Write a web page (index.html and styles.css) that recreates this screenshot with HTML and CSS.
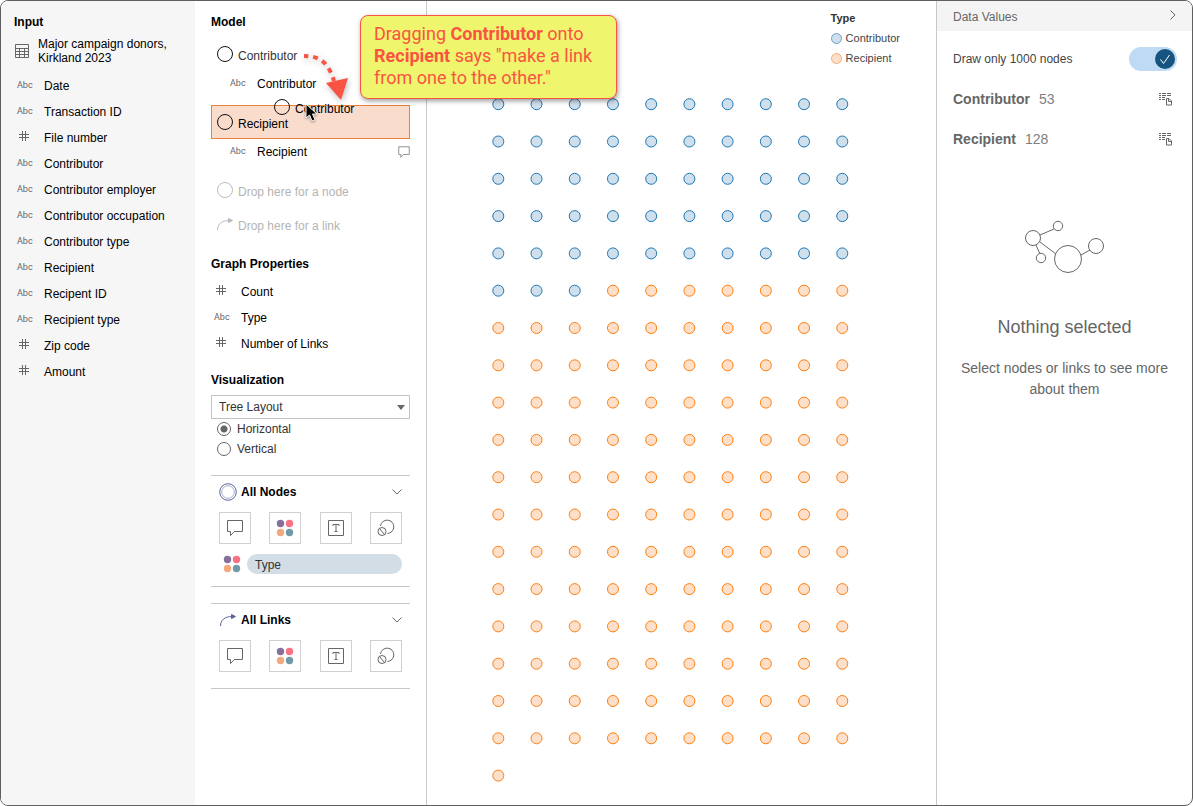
FILE: index.html
```html
<!DOCTYPE html>
<html lang="en">
<head>
    <meta charset="UTF-8">
    <meta name="viewport" content="width=device-width, initial-scale=1.0">
    <title>Graph Model</title>
    <link rel="stylesheet" href="styles.css">
</head>
<body>
    <svg class="sprite" aria-hidden="true">
        <symbol id="hash" viewBox="0 0 12 12"><path d="M4.500 1v10M7.500 1v10M1 4.500h10M1 7.500h10"/></symbol>
        <symbol id="node" viewBox="0 0 18 18"><circle cx="9" cy="9" r="7.500"/></symbol>
        <symbol id="link" viewBox="0 0 18 18"><path d="M1.500 15C1.500 9 6 5.500 13 5.500"/><path class="tip" d="M12.500 3.500l4 2-4 2z"/></symbol>
        <symbol id="chevron" viewBox="0 0 12 12"><path d="M1.500 3.500l4.500 4.500 4.500-4.500"/></symbol>
        <symbol id="bubble" viewBox="0 0 20 20"><path d="M2.500 2.500h15v11h-8l-4 4v-4h-3z"/></symbol>
        <symbol id="colors" viewBox="0 0 20 20">
            <circle cx="5.500" cy="5.500" r="3.700" fill="#85709a"/>
            <circle cx="14.500" cy="5.500" r="3.700" fill="#fa7084"/>
            <circle cx="5.500" cy="14.500" r="3.700" fill="#f4a97c"/>
            <circle cx="14.500" cy="14.500" r="3.700" fill="#6e9ba5"/>
        </symbol>
        <symbol id="label" viewBox="0 0 20 20"><path d="M2.500 2.500h15v15h-15zM7 8V6.500h6V8M10 6.500v7M8.500 13.500h3"/></symbol>
        <symbol id="size" viewBox="0 0 20 20"><path d="M4.500 8a6.700 6.700 0 1 1 7 7.500"/><circle cx="6" cy="13.500" r="4"/><path d="M3.500 10.500l5 6"/></symbol>
        <symbol id="rows" viewBox="0 0 14 14"><path d="M1 1.500h2M4 1.500h4M9 1.500h4M1 3.500h2M4 3.500h4M9 3.500h4M1 5.500h2M4 5.500h3M1 7.500h2M4 7.500h3"/><path d="M8.500 6.500h2.500l2.500 2.500v4h-5zM10.500 7v2.500h3"/></symbol>
    </svg>

    <div class="app">
        <aside class="input-panel">
            <h2>Input</h2>
            <div class="source">
                <svg class="table-icon" viewBox="0 0 14 14"><path d="M.5.5h13v13H.5zM.5 4.500h13M.5 7.500h13M.5 10.500h13M4.500 4.500v9M9.500 4.500v9"/></svg>
                <span>Major campaign donors, Kirkland 2023</span>
            </div>
            <ul class="fields">
                <li><span class="abc">Abc</span>Date</li>
                <li><span class="abc">Abc</span>Transaction ID</li>
                <li><svg class="hash"><use href="#hash"/></svg>File number</li>
                <li><span class="abc">Abc</span>Contributor</li>
                <li><span class="abc">Abc</span>Contributor employer</li>
                <li><span class="abc">Abc</span>Contributor occupation</li>
                <li><span class="abc">Abc</span>Contributor type</li>
                <li><span class="abc">Abc</span>Recipient</li>
                <li><span class="abc">Abc</span>Recipent ID</li>
                <li><span class="abc">Abc</span>Recipient type</li>
                <li><svg class="hash"><use href="#hash"/></svg>Zip code</li>
                <li><svg class="hash"><use href="#hash"/></svg>Amount</li>
            </ul>
        </aside>

        <section class="model-panel">
            <h2>Model</h2>
            <div class="model">
                <div class="node faded"><svg class="shape"><use href="#node"/></svg><span>Contributor</span></div>
                <div class="attribute"><span class="abc">Abc</span>Contributor</div>
                <div class="node target"><svg class="shape"><use href="#node"/></svg><span>Recipient</span></div>
                <div class="attribute"><span class="abc">Abc</span>Recipient<svg class="note"><use href="#bubble"/></svg></div>
                <div class="node drop"><svg class="shape"><use href="#node"/></svg><span>Drop here for a node</span></div>
                <div class="node drop"><svg class="shape"><use href="#link"/></svg><span>Drop here for a link</span></div>
            </div>

            <h2 class="spaced">Graph Properties</h2>
            <ul class="fields">
                <li><svg class="hash"><use href="#hash"/></svg>Count</li>
                <li><span class="abc">Abc</span>Type</li>
                <li><svg class="hash"><use href="#hash"/></svg>Number of Links</li>
            </ul>

            <h2 class="spaced">Visualization</h2>
            <div class="select">
                <select aria-label="Layout">
                    <option>Tree Layout</option>
                </select>
            </div>
            <label class="radio"><input type="radio" name="direction" checked>Horizontal</label>
            <label class="radio"><input type="radio" name="direction">Vertical</label>

            <div class="encoding">
                <div class="encoding-head">
                    <svg class="ring" viewBox="0 0 18 18"><circle cx="9" cy="9" r="8.300"/><circle class="inner" cx="9" cy="9" r="6.300"/></svg>
                    <h3>All Nodes</h3>
                    <svg class="chevron"><use href="#chevron"/></svg>
                </div>
                <div class="tools">
                    <button aria-label="Tooltip"><svg><use href="#bubble"/></svg></button>
                    <button aria-label="Color"><svg class="colors"><use href="#colors"/></svg></button>
                    <button aria-label="Label"><svg><use href="#label"/></svg></button>
                    <button aria-label="Size"><svg><use href="#size"/></svg></button>
                </div>
                <div class="pill-row"><svg class="colors"><use href="#colors"/></svg><span class="pill">Type</span></div>
            </div>

            <div class="encoding">
                <div class="encoding-head">
                    <svg class="ring"><use href="#link"/></svg>
                    <h3>All Links</h3>
                    <svg class="chevron"><use href="#chevron"/></svg>
                </div>
                <div class="tools">
                    <button aria-label="Tooltip"><svg><use href="#bubble"/></svg></button>
                    <button aria-label="Color"><svg class="colors"><use href="#colors"/></svg></button>
                    <button aria-label="Label"><svg><use href="#label"/></svg></button>
                    <button aria-label="Size"><svg><use href="#size"/></svg></button>
                </div>
            </div>

            <!-- drag in progress -->
            <div class="ghost"><svg class="shape"><use href="#node"/></svg><span>Contributor</span></div>
            <svg class="cursor" viewBox="0 0 14 20"><path d="M1 1v14l3.500-3 2.500 6 3-1.300L7.500 11H12z"/></svg>
            <svg class="arrow" viewBox="0 0 50 54"><path class="dots" d="M4 6C20 6 28 12 34 31"/><path class="head" d="M26 33l22-5-7 22z"/></svg>
            <div class="callout">Dragging <b>Contributor</b> onto <b>Recipient</b> says "make a link from one to the other."</div>
        </section>

        <main class="canvas">
            <svg id="graph" viewBox="0 0 509 804" preserveAspectRatio="xMidYMin meet"></svg>
            <div class="legend">
                <h4>Type</h4>
                <div><span class="dot contributor"></span>Contributor</div>
                <div><span class="dot recipient"></span>Recipient</div>
            </div>
        </main>

        <aside class="data-panel">
            <header>
                <span>Data Values</span>
                <svg class="chevron right"><use href="#chevron"/></svg>
            </header>
            <div class="values">
                <div class="limit">
                    <label for="limit">Draw only 1000 nodes</label>
                    <span class="toggle">
                        <input type="checkbox" id="limit" checked>
                        <svg viewBox="0 0 20 20"><path d="M5.500 10.500l3 4L14.500 6"/></svg>
                    </span>
                </div>
                <div class="count"><b>Contributor</b><span>53</span><svg><use href="#rows"/></svg></div>
                <div class="count"><b>Recipient</b><span>128</span><svg><use href="#rows"/></svg></div>
            </div>
            <div class="empty">
                <svg viewBox="0 0 82 54">
                    <path d="M16 15l14-6M12 25l4 9M16 22l16 12M57 35l9-5"/>
                    <circle cx="9" cy="18" r="7.500"/>
                    <circle cx="34" cy="6" r="4.700"/>
                    <circle cx="17" cy="38" r="4.700"/>
                    <circle cx="44" cy="39" r="13.500"/>
                    <circle cx="72" cy="26" r="7.500"/>
                </svg>
                <h3>Nothing selected</h3>
                <p>Select nodes or links to see more about them</p>
            </div>
        </aside>
    </div>

    <script>
        const graph = document.getElementById('graph');
        const contributors = 53;
        const recipients = 128;
        const columns = 10;

        for (let i = 0; i < contributors + recipients; i++) {
            const circle = document.createElementNS('http://www.w3.org/2000/svg', 'circle');
            circle.setAttribute('cx', 71.3 + (i % columns) * 38.22);
            circle.setAttribute('cy', 103.2 + Math.floor(i / columns) * 37.3);
            circle.setAttribute('r', 5.5);
            circle.setAttribute('class', i < contributors ? 'contributor' : 'recipient');
            graph.appendChild(circle);
        }
    </script>
</body>
</html>
```
FILE: styles.css
```css
* {
    box-sizing: border-box;
}
body {
    margin: 0;
    font-family: "Liberation Sans", Arial, sans-serif;
    font-size: 12px;
    line-height: 16px;
    color: #000;
}
h2, h3, h4, p, ul {
    margin: 0;
    padding: 0;
}
h2, h3 {
    font-size: 12px;
}
svg {
    display: block;
    flex: none;
    fill: none;
    stroke: #666;
}
.sprite {
    position: absolute;
    width: 0;
    height: 0;
}
.app {
    display: grid;
    grid-template-columns: 194px 232px 1fr 256px;
    min-height: 100vh;
    border: 1px solid #5f5f5f;
    border-radius: 8px;
    overflow: hidden;
}

/* input */
.input-panel {
    padding: 13px;
    background-color: #f6f6f6;
}
.source {
    display: flex;
    align-items: center;
    gap: 9px;
    margin: 7px 0 8px;
    padding-left: 1px;
    line-height: 14px;
}
.table-icon {
    width: 14px;
    height: 14px;
}
.fields {
    list-style: none;
}
.fields li {
    display: flex;
    align-items: center;
    height: 26px;
    padding-left: 3px;
}
.abc {
    width: 27px;
    padding-bottom: 3px;
    font-family: Roboto, sans-serif;
    font-size: 9px;
    color: #666;
}
.hash {
    width: 12px;
    height: 12px;
    margin: 0 14px 4px 1px;
}

/* model */
.model-panel {
    position: relative;
    padding: 13px 16px;
    border-right: 1px solid #c8c8c8;
}
.model {
    margin-top: 7px;
}
.node, .ghost {
    display: flex;
    align-items: center;
    gap: 4px;
    height: 34px;
    padding-left: 5px;
}
.node span, .ghost span {
    padding-top: 3px;
}
.shape {
    width: 18px;
    height: 18px;
    stroke: #111;
}
.faded {
    color: #333;
}
.target {
    margin-top: 8px;
    padding-left: 4px;
    background-color: #fadccd;
    border: 1px solid #e6813f;
}
.attribute {
    display: flex;
    align-items: center;
    height: 26px;
    padding-left: 19px;
}
.note {
    width: 14px;
    height: 14px;
    margin-left: auto;
    margin-right: -1px;
}
.drop {
    color: #b4b4b4;
}
.attribute + .drop {
    margin-top: 8px;
}
.drop .shape {
    stroke: #bbb;
    fill: none;
}
.tip {
    fill: context-stroke;
}
.spaced {
    margin: 15px 0 7px;
}
.select {
    position: relative;
}
.select::after {
    content: "";
    position: absolute;
    top: 10px;
    right: 5px;
    border: 4px solid transparent;
    border-top: 5px solid #666;
    border-bottom: 0;
}
.select select {
    display: block;
    width: 100%;
    height: 24px;
    padding: 0 7px;
    appearance: none;
    background-color: #fff;
    border: 1px solid #c4c4c4;
    border-radius: 0;
    font: inherit;
    color: #333;
}
.radio {
    display: flex;
    align-items: center;
    gap: 6px;
    height: 20px;
    padding-left: 6px;
    color: #333;
}
.radio input {
    appearance: none;
    width: 14px;
    height: 14px;
    margin: 0;
    border: 1px solid #666;
    border-radius: 50%;
}
.radio input:checked {
    background: radial-gradient(#666 3px, transparent 4px);
}
.encoding {
    margin-top: 16px;
    padding: 7px 8px 12px;
    border: solid #c8c8c8;
    border-width: 1px 0;
}
.encoding + .encoding {
    padding-bottom: 16px;
}
.encoding-head {
    display: flex;
    align-items: center;
    gap: 4px;
    height: 18px;
}
.ring {
    width: 18px;
    height: 18px;
    stroke: #5c6495;
}
.ring .inner {
    stroke: #a8adcf;
}
.chevron {
    width: 12px;
    height: 12px;
    margin-left: auto;
    margin-right: -1px;
}
.right {
    transform: rotate(-90deg);
}
.tools {
    display: flex;
    justify-content: space-between;
    margin-top: 11px;
}
.tools button {
    display: grid;
    place-items: center;
    width: 32px;
    height: 32px;
    padding: 0;
    background-color: #fff;
    border: 1px solid #d0d0d0;
}
.tools svg, .pill-row svg {
    width: 20px;
    height: 20px;
}
.tools .colors, .pill-row .colors {
    stroke: none;
}
.pill-row {
    display: flex;
    align-items: center;
    gap: 5px;
    margin-top: 10px;
    padding-left: 3px;
}
.pill {
    flex: 1;
    padding: 3px 8px 1px;
    background-color: #d3dde6;
    border-radius: 10px;
    color: #333;
}

/* drag overlay */
.ghost {
    position: absolute;
    top: 89px;
    left: 73px;
}
.cursor {
    position: absolute;
    top: 102px;
    left: 110px;
    width: 14px;
    height: 20px;
    fill: #000;
    stroke: #fff;
    filter: drop-shadow(0 1px 1px #0006);
}
.arrow {
    position: absolute;
    top: 49px;
    left: 105px;
    width: 50px;
    height: 54px;
    stroke: none;
    filter: drop-shadow(1px 2px 3px #0004);
}
.arrow .dots {
    stroke: #f95443;
    stroke-width: 4;
    stroke-dasharray: 5 5;
    stroke-dashoffset: 1;
}
.arrow .head {
    fill: #f95443;
}
.callout {
    position: absolute;
    z-index: 2;
    top: 14px;
    left: 165px;
    width: 257px;
    padding: 7px 13px 9px;
    background-color: #eff56c;
    border: 1px solid #f95443;
    border-radius: 8px;
    box-shadow: 1px 2px 5px #0006;
    font-family: Roboto, sans-serif;
    font-size: 18px;
    line-height: 22px;
    color: #f95443;
}

/* graph */
.canvas {
    position: relative;
}
#graph {
    width: 100%;
}
circle.contributor {
    fill: #cfdfec;
    stroke: #1f77b4;
}
circle.recipient {
    fill: #fddfca;
    stroke: #ff7f0e;
}
.legend {
    position: absolute;
    top: 7px;
    right: 36px;
    font-size: 11px;
    line-height: 20px;
    color: #444;
}
.legend h4 {
    font-size: 11px;
    color: #333;
}
.legend div {
    display: flex;
    align-items: center;
    gap: 4px;
}
.dot {
    width: 11px;
    height: 11px;
    border: 1px solid;
    border-radius: 50%;
}
.dot.contributor {
    background-color: #cfdfec;
    border-color: #6aa3cf;
}
.dot.recipient {
    background-color: #fddfca;
    border-color: #fdaa69;
}

/* data values */
.data-panel {
    border-left: 1px solid #c8c8c8;
    color: #666;
}
.data-panel header {
    display: flex;
    align-items: center;
    height: 30px;
    padding: 2px 14px 0 16px;
    background-color: #f4f4f4;
}
.data-panel header .chevron {
    margin-bottom: 4px;
}
.values {
    padding: 16px 15px 0 16px;
}
.limit {
    display: flex;
    align-items: center;
    justify-content: space-between;
    margin-bottom: 8px;
    color: #444;
}
.toggle {
    position: relative;
    height: 24px;
}
.toggle input {
    appearance: none;
    width: 48px;
    height: 24px;
    margin: 0;
    background-color: #bfdbf3;
    border-radius: 12px;
}
.toggle svg {
    position: absolute;
    top: 2px;
    right: 2px;
    width: 20px;
    height: 20px;
    border-radius: 50%;
    background-color: #17537f;
    stroke: #fff;
    pointer-events: none;
}
.count {
    display: flex;
    align-items: center;
    gap: 9px;
    height: 40px;
    padding-right: 5px;
    font-size: 14px;
}
.count span {
    color: #808080;
}
.count svg {
    width: 14px;
    height: 14px;
    margin-left: auto;
}
.empty {
    padding: 61px 15px 0;
    text-align: center;
}
.empty svg {
    width: 82px;
    height: 54px;
    margin: 0 auto;
}
.empty h3 {
    margin: 41px 0 19px;
    font-size: 18px;
    font-weight: normal;
    line-height: 24px;
}
.empty p {
    font-size: 14px;
    line-height: 21px;
}
```
